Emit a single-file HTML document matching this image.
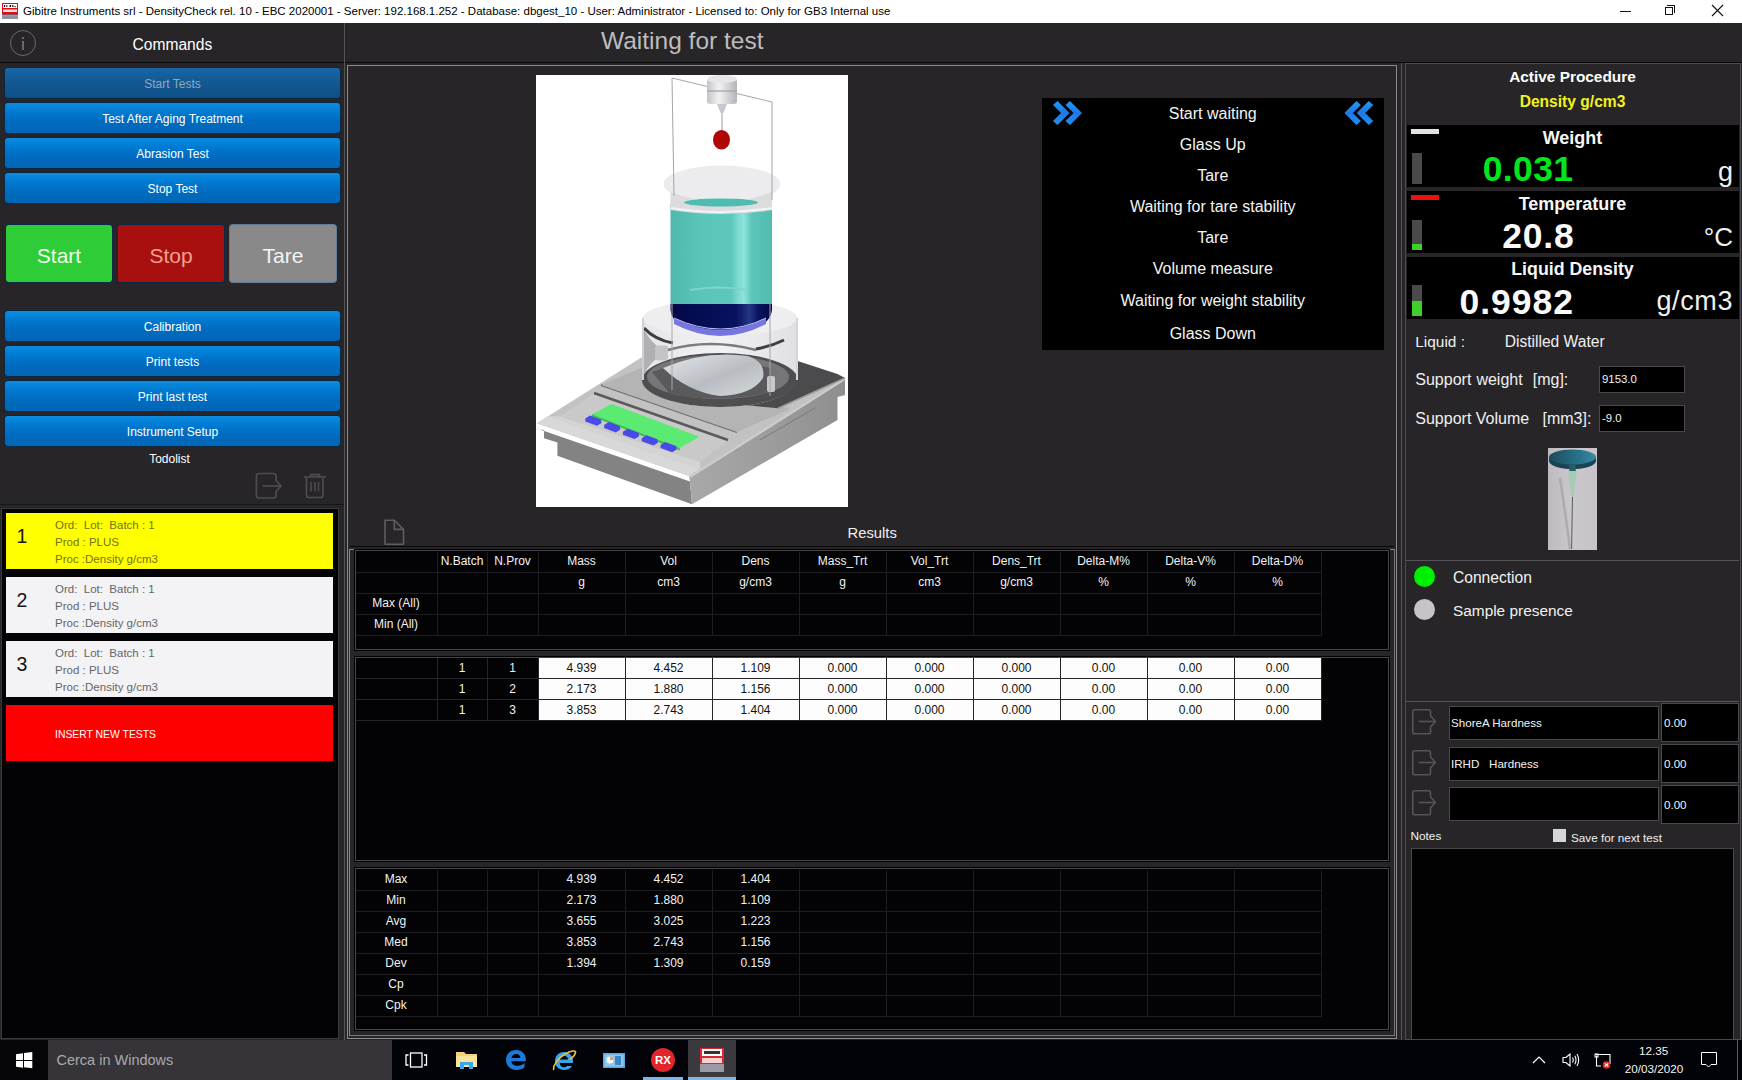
<!DOCTYPE html><html><head><meta charset="utf-8"><style>
*{margin:0;padding:0;box-sizing:border-box}
html,body{width:1742px;height:1080px;overflow:hidden;background:#272528;font-family:"Liberation Sans",sans-serif;color:#fff}
.a{position:absolute}
.t{white-space:pre}
.btn{position:absolute;left:5px;width:335px;height:30px;border-radius:3px;background:linear-gradient(#0c8ce2,#007ad2 30%,#006cc0 60%,#0066b6);box-shadow:0 0 0 1px #0b2740}
.big{position:absolute;top:225px;height:57px;border-radius:3px;box-shadow:0 0 0 1px #0a2a48}
</style></head><body>
<div class="a" style="left:0px;top:0px;width:1742px;height:23px;background:#fff;"></div>
<svg class="a" style="left:2px;top:3px" width="16" height="16"><rect width="16" height="11" fill="#e40c12"/><rect x="1" y="1" width="14" height="4" fill="#fff"/><g fill="#111"><rect x="2" y="2" width="1.2" height="2"/><rect x="4" y="2" width="1.5" height="2" fill="#666"/><rect x="7.5" y="2" width="1.5" height="2"/><rect x="10" y="2" width="1.5" height="2" fill="#333"/><rect x="12.5" y="3" width="1.2" height="1.2"/></g><rect x="1" y="6.5" width="14" height="2.5" fill="#f6dede"/><rect x="0" y="11" width="16" height="1.5" fill="#8a4a5a"/><rect x="0" y="12.5" width="16" height="3.5" fill="#8e92a4"/></svg>
<div class="a t " style="top:6.17px;font-size:11.5px;line-height:11.5px;color:#000;left:23px;">Gibitre Instruments srl - DensityCheck rel. 10 - EBC 2020001 - Server: 192.168.1.252 - Database: dbgest_10 - User: Administrator - Licensed to: Only for GB3 Internal use</div>
<div class="a" style="left:1620px;top:11px;width:11px;height:1px;background:#111;"></div>
<div class="a" style="left:1665px;top:7px;width:8px;height:8px;border:1px solid #111"></div>
<div class="a" style="left:1667px;top:5px;width:8px;height:8px;border-top:1px solid #111;border-right:1px solid #111"></div>
<svg class="a" style="left:1711px;top:4px" width="13" height="13"><path d="M1 1L12 12M12 1L1 12" stroke="#111" stroke-width="1.1"/></svg>
<div class="a" style="left:0px;top:62px;width:1742px;height:1px;background:#0a0a0a;"></div>
<div class="a" style="left:344px;top:23px;width:1px;height:1017px;background:#555;"></div>
<div class="a" style="left:10px;top:30px;width:26px;height:26px;border:1.6px solid #6a6a6a;border-radius:50%"></div>
<div class="a" style="left:22px;top:37px;width:1.6px;height:2px;background:#6a6a6a;"></div>
<div class="a" style="left:22px;top:40.5px;width:1.6px;height:9.5px;background:#6a6a6a;"></div>
<div class="a t " style="top:37.29px;font-size:15.6px;line-height:15.6px;color:#fff;left:132.5px;">Commands</div>
<div class="btn" style="top:67.5px;background:linear-gradient(#1b66a8,#135a96 40%,#0f4f86);"></div>
<div class="a t " style="top:77.84px;font-size:12px;line-height:12px;color:#8ea9c2;left:7.50px;width:330px;text-align:center;">Start Tests</div>
<div class="btn" style="top:103px;"></div>
<div class="a t " style="top:113.34px;font-size:12px;line-height:12px;color:#fff;left:7.50px;width:330px;text-align:center;">Test After Aging Treatment</div>
<div class="btn" style="top:138px;"></div>
<div class="a t " style="top:148.34px;font-size:12px;line-height:12px;color:#fff;left:7.50px;width:330px;text-align:center;">Abrasion Test</div>
<div class="btn" style="top:173px;"></div>
<div class="a t " style="top:183.34px;font-size:12px;line-height:12px;color:#fff;left:7.50px;width:330px;text-align:center;">Stop Test</div>
<div class="big" style="left:6px;width:106px;background:#2ecc37"></div>
<div class="big" style="left:118px;width:106px;background:#a81010"></div>
<div class="big" style="left:230px;width:106px;background:#898989;box-shadow:0 0 0 1px #607c98"></div>
<div class="a t " style="top:245.22px;font-size:21px;line-height:21px;color:#ecffec;left:6.00px;width:106px;text-align:center;">Start</div>
<div class="a t " style="top:245.22px;font-size:21px;line-height:21px;color:#f4a090;left:118.00px;width:106px;text-align:center;">Stop</div>
<div class="a t " style="top:245.22px;font-size:21px;line-height:21px;color:#f4f4f4;left:230.00px;width:106px;text-align:center;">Tare</div>
<div class="btn" style="top:310.5px;"></div>
<div class="a t " style="top:320.84px;font-size:12px;line-height:12px;color:#fff;left:7.50px;width:330px;text-align:center;">Calibration</div>
<div class="btn" style="top:345.5px;"></div>
<div class="a t " style="top:355.84px;font-size:12px;line-height:12px;color:#fff;left:7.50px;width:330px;text-align:center;">Print tests</div>
<div class="btn" style="top:380.5px;"></div>
<div class="a t " style="top:390.84px;font-size:12px;line-height:12px;color:#fff;left:7.50px;width:330px;text-align:center;">Print last test</div>
<div class="btn" style="top:415.5px;"></div>
<div class="a t " style="top:425.84px;font-size:12px;line-height:12px;color:#fff;left:7.50px;width:330px;text-align:center;">Instrument Setup</div>
<div class="a t " style="top:452.84px;font-size:12px;line-height:12px;color:#fff;left:119.50px;width:100px;text-align:center;">Todolist</div>
<svg class="a" style="left:254px;top:471px" width="30" height="30" fill="none" stroke="#4e4c50" stroke-width="1.7" stroke-linejoin="round">
<path d="M22 9.5V5Q22 2.5 19.5 2.5H5Q2.4 2.5 2.4 5V24.5Q2.4 27 5 27H19.5Q22 27 22 24.5V20.3L27.2 15L22 9.5"/><path d="M8.8 15H26.5"/></svg>
<svg class="a" style="left:302px;top:472px" width="26" height="28" fill="none" stroke="#4e4c50" stroke-width="1.7">
<path d="M2 4.9H23.8"/><path d="M8.6 4.5V2.6H17.4V4.5"/><path d="M4.5 6V23Q4.5 25.5 7 25.5H18.5Q21 25.5 21 23V6"/><path d="M9 10V19.5M12.9 10V19.5M16.5 10V19.5" stroke-width="1.5"/></svg>
<div class="a" style="left:1px;top:508px;width:338px;height:531px;background:#030205;border:1px solid #3a3a3a"></div>
<div class="a" style="left:0px;top:504px;width:344px;height:1px;background:#151515;"></div>
<div class="a" style="left:6px;top:513px;width:327px;height:56px;background:#ffff00;"></div>
<div class="a t " style="top:527.49px;font-size:19.5px;line-height:19.5px;color:#151515;left:7.00px;width:30px;text-align:center;">1</div>
<div class="a t " style="top:520.47px;font-size:11.5px;line-height:11.5px;color:#76721a;left:55px;">Ord:  Lot:  Batch : 1</div>
<div class="a t " style="top:537.47px;font-size:11.5px;line-height:11.5px;color:#76721a;left:55px;">Prod : PLUS</div>
<div class="a t " style="top:554.47px;font-size:11.5px;line-height:11.5px;color:#76721a;left:55px;">Proc :Density g/cm3</div>
<div class="a" style="left:6px;top:577px;width:327px;height:56px;background:#f3f2f5;"></div>
<div class="a t " style="top:591.49px;font-size:19.5px;line-height:19.5px;color:#151515;left:7.00px;width:30px;text-align:center;">2</div>
<div class="a t " style="top:584.47px;font-size:11.5px;line-height:11.5px;color:#666;left:55px;">Ord:  Lot:  Batch : 1</div>
<div class="a t " style="top:601.47px;font-size:11.5px;line-height:11.5px;color:#666;left:55px;">Prod : PLUS</div>
<div class="a t " style="top:618.47px;font-size:11.5px;line-height:11.5px;color:#666;left:55px;">Proc :Density g/cm3</div>
<div class="a" style="left:6px;top:641px;width:327px;height:56px;background:#f3f2f5;"></div>
<div class="a t " style="top:655.49px;font-size:19.5px;line-height:19.5px;color:#151515;left:7.00px;width:30px;text-align:center;">3</div>
<div class="a t " style="top:648.47px;font-size:11.5px;line-height:11.5px;color:#666;left:55px;">Ord:  Lot:  Batch : 1</div>
<div class="a t " style="top:665.47px;font-size:11.5px;line-height:11.5px;color:#666;left:55px;">Prod : PLUS</div>
<div class="a t " style="top:682.47px;font-size:11.5px;line-height:11.5px;color:#666;left:55px;">Proc :Density g/cm3</div>
<div class="a" style="left:6px;top:705px;width:327px;height:56px;background:#ff0000;"></div>
<div class="a t " style="top:729.70px;font-size:10.4px;line-height:10.4px;color:#fff;left:55px;">INSERT NEW TESTS</div>
<div class="a t " style="top:28.86px;font-size:24.5px;line-height:24.5px;color:#bdbdbd;left:601px;">Waiting for test</div>
<div class="a" style="left:347px;top:65px;width:1050px;height:974px;border:1px solid #8c8c8c"></div>
<div class="a" style="left:349px;top:549px;width:1046px;height:487px;border:1px solid #8a8a8a;border-right-color:#777;border-bottom-color:#777"></div>
<div class="a" style="left:350px;top:546px;width:1044px;height:1px;background:#0a0a0a;"></div>
<div class="a" style="left:536px;top:75px;width:312px;height:432px;background:#fff;overflow:hidden"><svg width="312" height="432" viewBox="536 75 312 432" style="position:absolute;left:0;top:0"><defs><linearGradient id="liq" x1="0" x2="1"><stop offset="0" stop-color="#4fb9ad"/><stop offset="0.3" stop-color="#5cc5ba"/><stop offset="0.6" stop-color="#5ec7bc"/><stop offset="0.66" stop-color="#7ad8cf"/><stop offset="0.72" stop-color="#8de4dc"/><stop offset="0.8" stop-color="#5dc5ba"/><stop offset="1" stop-color="#52bcb1"/></linearGradient><linearGradient id="navy" x1="0" x2="1"><stop offset="0" stop-color="#030848"/><stop offset="0.65" stop-color="#081260"/><stop offset="0.78" stop-color="#253585"/><stop offset="0.86" stop-color="#0a1560"/><stop offset="1" stop-color="#040848"/></linearGradient><linearGradient id="sens" x1="0" x2="1"><stop offset="0" stop-color="#c4c4c8"/><stop offset="0.4" stop-color="#f2f2f4"/><stop offset="1" stop-color="#b4b4b8"/></linearGradient><linearGradient id="rface" x1="0" x2="1"><stop offset="0" stop-color="#a8a8a8"/><stop offset="0.6" stop-color="#9a9a9a"/><stop offset="1" stop-color="#8e8e8e"/></linearGradient><linearGradient id="plate" x1="0" x2="1" y1="0" y2="1"><stop offset="0" stop-color="#e4e6ea"/><stop offset="0.55" stop-color="#b9bdc1"/><stop offset="1" stop-color="#d6d8db"/></linearGradient><linearGradient id="glass" x1="0" x2="1"><stop offset="0" stop-color="#e6e6e8"/><stop offset="0.5" stop-color="#f2f2f4"/><stop offset="1" stop-color="#e0e0e2"/></linearGradient></defs><!-- front face --><polygon points="537,428.4 690,481.5 692,504.3 557.4,455.8 557.4,442.4 544,438.2 544,430 537,429" fill="#838383"/><!-- right face --><polygon points="689,476 845,378 845,395 837.5,397 837.5,420 692,504.3 690,481.5" fill="url(#rface)"/><line x1="690" y1="477" x2="845" y2="379" stroke="#cfcfcf" stroke-width="2"/><line x1="760" y1="440" x2="815" y2="408" stroke="#7a7a7a" stroke-width="1"/><!-- top plate --><polygon points="537,423.2 689,476 845,378 692,325.5" fill="#c2c2c2"/><!-- front bevel strip --><polygon points="537,423.2 689,476 700,469 548,416" fill="#d8d8d8"/><!-- display recess --><polygon points="560,416.5 594,393 728,440 700,462" fill="#c9c9c9"/><polygon points="548,416 560,416.5 700,462 700,469" fill="#d4d4d4"/><line x1="594" y1="393" x2="728" y2="440" stroke="#5a5a5a" stroke-width="2.6"/><line x1="601" y1="385" x2="737" y2="432" stroke="#6e6e6e" stroke-width="2"/><polygon points="601,385 737,432 790,409 660,360" fill="#b4b4b4"/><!-- dark back right area --><polygon points="773,353 837.5,374 845,378 778,408.3 745,405 760,360" fill="#4b4a4d"/><line x1="845" y1="378" x2="778" y2="408.3" stroke="#9a9a9a" stroke-width="1.5"/><!-- green display --><polygon points="592,414.2 611.6,404.1 699.4,436.7 679.8,448" fill="#5ceb72"/><polygon points="592,414.2 679.8,448 679.8,450.5 592,416.5" fill="#38c24e"/><!-- blue keys --><g fill="#4a4ae6"><polygon points="585.3,418.5 590,415.5 601,419.5 601.5,423 597,425.8 585.3,421.5"/><polygon points="604.1,425.1 608.8,422.1 619.8,426.1 620.3,429.6 615.8,432.4 604.1,428.1"/><polygon points="622.9,431.7 627.6,428.7 638.6,432.7 639.1,436.2 634.6,439 622.9,434.7"/><polygon points="641.7,438.3 646.4,435.3 657.4,439.3 657.9,442.8 653.4,445.6 641.7,441.3"/><polygon points="660.5,444.9 665.2,441.9 676.2,445.9 676.7,449.4 672.2,452.2 660.5,447.9"/></g><!-- glass enclosure --><path d="M643,318 L643,380 A77,27 0 0 0 797,380 L797,318Z" fill="url(#glass)"/><ellipse cx="720" cy="380" rx="78" ry="27" fill="#4e4e50"/><ellipse cx="718" cy="377" rx="71" ry="22" fill="#767678"/><path d="M652,372 Q700,352 770,368 L772,392 Q720,404 670,394Z" fill="#5a5a5c"/><path d="M663,368 Q705,350 748,356 Q766,362 763,378 Q752,395 720,396 Q688,392 663,368Z" fill="url(#plate)"/><path d="M643,326 L643,376 Q650,360 668,352 Q650,345 643,326Z" fill="#b0b0b2"/><ellipse cx="720" cy="318" rx="77" ry="18" fill="#eeeef0"/><path d="M644,328 Q655,340 673,343 M756,349 Q772,346 784,340" stroke="#3e3e40" stroke-width="3" fill="none"/><path d="M668,350 Q710,338 756,350" stroke="#7a7a7c" stroke-width="2.5" fill="none"/><rect x="655" y="345.6" width="13" height="15" rx="3" fill="#c4c4c6"/><rect x="767" y="376" width="8" height="16" rx="2" fill="#c8c8ca"/><rect x="642" y="318" width="2" height="62" fill="#d0d0d2"/><rect x="796" y="318" width="2" height="62" fill="#d6d6d8"/><!-- beaker --><ellipse cx="722" cy="184" rx="58.5" ry="18.5" fill="#ececef"/><path d="M670.5,204 L670.5,304 L772,304 L772,204Z" fill="url(#liq)"/><path d="M670.5,304 L772,304 L772,310 Q770,332 721,334 Q672,332 670.5,310Z" fill="url(#navy)"/><path d="M674,318 Q721,342 766,318 L766,324 Q721,348 674,324Z" fill="#7676e0"/><path d="M674,318 Q721,340 766,318" stroke="#c0c0f6" stroke-width="1" fill="none"/><path d="M670.5,192 Q721,212 772,192 L772,210 Q721,218 670.5,210Z" fill="#dcdcdf"/><ellipse cx="721" cy="202.5" rx="37" ry="4" fill="#4dbdb1"/><path d="M671,208 Q721,216 772,208" stroke="#f0f4f4" stroke-width="2.2" fill="none"/><path d="M690,290 Q720,285 745,290" stroke="#7ed6cc" stroke-width="2" fill="none"/><!-- wire frame --><path d="M674,196 L672,78 L772,102 L772,200" stroke="#a4a4a8" stroke-width="1" fill="none"/><path d="M672,304 L672,390 M770,304 L770,396" stroke="#a8a8ac" stroke-width="1" fill="none"/><!-- sensor --><rect x="707" y="79" width="30" height="25" rx="3" fill="url(#sens)"/><ellipse cx="722" cy="79" rx="15" ry="4" fill="#e6e6e8"/><line x1="707" y1="91" x2="737" y2="91" stroke="#a0a0a4" stroke-width="1.2"/><path d="M717,104 L727,104 L723.5,113 L720.5,113Z" fill="#c8c8d0"/><line x1="722" y1="113" x2="722" y2="131" stroke="#9a9aa0" stroke-width="1"/><ellipse cx="721.5" cy="139.7" rx="8.5" ry="9.8" fill="#b00606"/></svg></div>
<div class="a" style="left:1042px;top:98px;width:342px;height:252px;background:#000"></div>
<div class="a t " style="top:106.26px;font-size:16px;line-height:16px;color:#f4f4f4;left:1042.75px;width:340px;text-align:center;">Start waiting</div>
<div class="a t " style="top:137.46px;font-size:16px;line-height:16px;color:#f4f4f4;left:1042.75px;width:340px;text-align:center;">Glass Up</div>
<div class="a t " style="top:168.16px;font-size:16px;line-height:16px;color:#f4f4f4;left:1042.75px;width:340px;text-align:center;">Tare</div>
<div class="a t " style="top:199.06px;font-size:16px;line-height:16px;color:#f4f4f4;left:1042.75px;width:340px;text-align:center;">Waiting for tare stability</div>
<div class="a t " style="top:229.76px;font-size:16px;line-height:16px;color:#f4f4f4;left:1042.75px;width:340px;text-align:center;">Tare</div>
<div class="a t " style="top:260.96px;font-size:16px;line-height:16px;color:#f4f4f4;left:1042.75px;width:340px;text-align:center;">Volume measure</div>
<div class="a t " style="top:292.76px;font-size:16px;line-height:16px;color:#f4f4f4;left:1042.75px;width:340px;text-align:center;">Waiting for weight stability</div>
<div class="a t " style="top:326.36px;font-size:16px;line-height:16px;color:#f4f4f4;left:1042.75px;width:340px;text-align:center;">Glass Down</div>
<svg class="a" style="left:1050px;top:99px" width="36" height="30"><defs><linearGradient id="cg" x1="0" y1="0" x2="0" y2="1"><stop offset="0" stop-color="#1a9cfa"/><stop offset="0.5" stop-color="#1f78e6"/><stop offset="1" stop-color="#2290f0"/></linearGradient></defs>
<path d="M3,6 L7.5,2 L19.5,14 L7.5,26 L3,22 L11,14Z" fill="url(#cg)"/><path d="M15.5,6 L20.0,2 L32.0,14 L20.0,26 L15.5,22 L23.5,14Z" fill="url(#cg)"/></svg>
<svg class="a" style="left:1342px;top:99px" width="36" height="30">
<path d="M18.9,6 L14.4,2 L2.4,14 L14.4,26 L18.9,22 L10.9,14Z" fill="url(#cg)"/><path d="M31.2,6 L26.7,2 L14.7,14 L26.7,26 L31.2,22 L23.2,14Z" fill="url(#cg)"/></svg>
<svg class="a" style="left:383px;top:518px" width="23" height="29" fill="none" stroke="#5e5c60" stroke-width="1.6" stroke-linejoin="round"><path d="M2 2.3H11.3L20.5 11.4V26.2H2Z M11.3 2.3V11.4H20.5"/></svg>
<div class="a t " style="top:526.37px;font-size:14.8px;line-height:14.8px;color:#f0f0f0;left:847.5px;">Results</div>
<div class="a" style="left:354px;top:549px;width:1036px;height:102px;border:1px solid #000"></div>
<div class="a" style="left:355px;top:550px;width:1034px;height:100px;background:#030204;border:1px solid #474549"></div>
<div class="a" style="left:356px;top:571.5px;width:965px;height:1px;background:#1e1d20;"></div>
<div class="a" style="left:356px;top:592.5px;width:965px;height:1px;background:#1e1d20;"></div>
<div class="a" style="left:356px;top:613.5px;width:965px;height:1px;background:#1e1d20;"></div>
<div class="a" style="left:356px;top:634.5px;width:965px;height:1px;background:#1e1d20;"></div>
<div class="a" style="left:437px;top:551.5px;width:1px;height:84.0px;background:#1e1d20;"></div>
<div class="a" style="left:487px;top:551.5px;width:1px;height:84.0px;background:#1e1d20;"></div>
<div class="a" style="left:538px;top:551.5px;width:1px;height:84.0px;background:#1e1d20;"></div>
<div class="a" style="left:625px;top:551.5px;width:1px;height:84.0px;background:#1e1d20;"></div>
<div class="a" style="left:712px;top:551.5px;width:1px;height:84.0px;background:#1e1d20;"></div>
<div class="a" style="left:799px;top:551.5px;width:1px;height:84.0px;background:#1e1d20;"></div>
<div class="a" style="left:886px;top:551.5px;width:1px;height:84.0px;background:#1e1d20;"></div>
<div class="a" style="left:973px;top:551.5px;width:1px;height:84.0px;background:#1e1d20;"></div>
<div class="a" style="left:1060px;top:551.5px;width:1px;height:84.0px;background:#1e1d20;"></div>
<div class="a" style="left:1147px;top:551.5px;width:1px;height:84.0px;background:#1e1d20;"></div>
<div class="a" style="left:1234px;top:551.5px;width:1px;height:84.0px;background:#1e1d20;"></div>
<div class="a" style="left:1321px;top:551.5px;width:1px;height:84.0px;background:#1e1d20;"></div>
<div class="a t " style="top:554.84px;font-size:12px;line-height:12px;color:#f2f2f2;left:417.00px;width:90px;text-align:center;">N.Batch</div>
<div class="a t " style="top:554.84px;font-size:12px;line-height:12px;color:#f2f2f2;left:467.50px;width:90px;text-align:center;">N.Prov</div>
<div class="a t " style="top:554.84px;font-size:12px;line-height:12px;color:#f2f2f2;left:536.50px;width:90px;text-align:center;">Mass</div>
<div class="a t " style="top:554.84px;font-size:12px;line-height:12px;color:#f2f2f2;left:623.50px;width:90px;text-align:center;">Vol</div>
<div class="a t " style="top:554.84px;font-size:12px;line-height:12px;color:#f2f2f2;left:710.50px;width:90px;text-align:center;">Dens</div>
<div class="a t " style="top:554.84px;font-size:12px;line-height:12px;color:#f2f2f2;left:797.50px;width:90px;text-align:center;">Mass_Trt</div>
<div class="a t " style="top:554.84px;font-size:12px;line-height:12px;color:#f2f2f2;left:884.50px;width:90px;text-align:center;">Vol_Trt</div>
<div class="a t " style="top:554.84px;font-size:12px;line-height:12px;color:#f2f2f2;left:971.50px;width:90px;text-align:center;">Dens_Trt</div>
<div class="a t " style="top:554.84px;font-size:12px;line-height:12px;color:#f2f2f2;left:1058.50px;width:90px;text-align:center;">Delta-M%</div>
<div class="a t " style="top:554.84px;font-size:12px;line-height:12px;color:#f2f2f2;left:1145.50px;width:90px;text-align:center;">Delta-V%</div>
<div class="a t " style="top:554.84px;font-size:12px;line-height:12px;color:#f2f2f2;left:1232.50px;width:90px;text-align:center;">Delta-D%</div>
<div class="a t " style="top:576.04px;font-size:12px;line-height:12px;color:#f2f2f2;left:536.50px;width:90px;text-align:center;">g</div>
<div class="a t " style="top:576.04px;font-size:12px;line-height:12px;color:#f2f2f2;left:623.50px;width:90px;text-align:center;">cm3</div>
<div class="a t " style="top:576.04px;font-size:12px;line-height:12px;color:#f2f2f2;left:710.50px;width:90px;text-align:center;">g/cm3</div>
<div class="a t " style="top:576.04px;font-size:12px;line-height:12px;color:#f2f2f2;left:797.50px;width:90px;text-align:center;">g</div>
<div class="a t " style="top:576.04px;font-size:12px;line-height:12px;color:#f2f2f2;left:884.50px;width:90px;text-align:center;">cm3</div>
<div class="a t " style="top:576.04px;font-size:12px;line-height:12px;color:#f2f2f2;left:971.50px;width:90px;text-align:center;">g/cm3</div>
<div class="a t " style="top:576.04px;font-size:12px;line-height:12px;color:#f2f2f2;left:1058.50px;width:90px;text-align:center;">%</div>
<div class="a t " style="top:576.04px;font-size:12px;line-height:12px;color:#f2f2f2;left:1145.50px;width:90px;text-align:center;">%</div>
<div class="a t " style="top:576.04px;font-size:12px;line-height:12px;color:#f2f2f2;left:1232.50px;width:90px;text-align:center;">%</div>
<div class="a t " style="top:597.44px;font-size:12px;line-height:12px;color:#f2f2f2;left:351.00px;width:90px;text-align:center;">Max (All)</div>
<div class="a t " style="top:618.24px;font-size:12px;line-height:12px;color:#f2f2f2;left:351.00px;width:90px;text-align:center;">Min (All)</div>
<div class="a" style="left:354px;top:656px;width:1036px;height:206px;border:1px solid #000"></div>
<div class="a" style="left:355px;top:657px;width:1034px;height:204px;background:#030204;border:1px solid #474549"></div>
<div class="a" style="left:538px;top:658px;width:783px;height:63px;background:#fdfdfd;"></div>
<div class="a" style="left:356px;top:678px;width:965px;height:1px;background:#262428;"></div>
<div class="a" style="left:356px;top:699px;width:965px;height:1px;background:#262428;"></div>
<div class="a" style="left:356px;top:720px;width:965px;height:1px;background:#262428;"></div>
<div class="a" style="left:437px;top:658px;width:1px;height:63px;background:#262428;"></div>
<div class="a" style="left:487px;top:658px;width:1px;height:63px;background:#262428;"></div>
<div class="a" style="left:538px;top:658px;width:1px;height:63px;background:#262428;"></div>
<div class="a" style="left:625px;top:658px;width:1px;height:63px;background:#262428;"></div>
<div class="a" style="left:712px;top:658px;width:1px;height:63px;background:#262428;"></div>
<div class="a" style="left:799px;top:658px;width:1px;height:63px;background:#262428;"></div>
<div class="a" style="left:886px;top:658px;width:1px;height:63px;background:#262428;"></div>
<div class="a" style="left:973px;top:658px;width:1px;height:63px;background:#262428;"></div>
<div class="a" style="left:1060px;top:658px;width:1px;height:63px;background:#262428;"></div>
<div class="a" style="left:1147px;top:658px;width:1px;height:63px;background:#262428;"></div>
<div class="a" style="left:1234px;top:658px;width:1px;height:63px;background:#262428;"></div>
<div class="a" style="left:1321px;top:658px;width:1px;height:63px;background:#262428;"></div>
<div class="a t " style="top:662.04px;font-size:12px;line-height:12px;color:#f2f2f2;left:419.00px;width:86px;text-align:center;">1</div>
<div class="a t " style="top:662.04px;font-size:12px;line-height:12px;color:#f2f2f2;left:469.50px;width:86px;text-align:center;">1</div>
<div class="a t " style="top:662.04px;font-size:12px;line-height:12px;color:#111;left:538.50px;width:86px;text-align:center;">4.939</div>
<div class="a t " style="top:662.04px;font-size:12px;line-height:12px;color:#111;left:625.50px;width:86px;text-align:center;">4.452</div>
<div class="a t " style="top:662.04px;font-size:12px;line-height:12px;color:#111;left:712.50px;width:86px;text-align:center;">1.109</div>
<div class="a t " style="top:662.04px;font-size:12px;line-height:12px;color:#111;left:799.50px;width:86px;text-align:center;">0.000</div>
<div class="a t " style="top:662.04px;font-size:12px;line-height:12px;color:#111;left:886.50px;width:86px;text-align:center;">0.000</div>
<div class="a t " style="top:662.04px;font-size:12px;line-height:12px;color:#111;left:973.50px;width:86px;text-align:center;">0.000</div>
<div class="a t " style="top:662.04px;font-size:12px;line-height:12px;color:#111;left:1060.50px;width:86px;text-align:center;">0.00</div>
<div class="a t " style="top:662.04px;font-size:12px;line-height:12px;color:#111;left:1147.50px;width:86px;text-align:center;">0.00</div>
<div class="a t " style="top:662.04px;font-size:12px;line-height:12px;color:#111;left:1234.50px;width:86px;text-align:center;">0.00</div>
<div class="a t " style="top:683.04px;font-size:12px;line-height:12px;color:#f2f2f2;left:419.00px;width:86px;text-align:center;">1</div>
<div class="a t " style="top:683.04px;font-size:12px;line-height:12px;color:#f2f2f2;left:469.50px;width:86px;text-align:center;">2</div>
<div class="a t " style="top:683.04px;font-size:12px;line-height:12px;color:#111;left:538.50px;width:86px;text-align:center;">2.173</div>
<div class="a t " style="top:683.04px;font-size:12px;line-height:12px;color:#111;left:625.50px;width:86px;text-align:center;">1.880</div>
<div class="a t " style="top:683.04px;font-size:12px;line-height:12px;color:#111;left:712.50px;width:86px;text-align:center;">1.156</div>
<div class="a t " style="top:683.04px;font-size:12px;line-height:12px;color:#111;left:799.50px;width:86px;text-align:center;">0.000</div>
<div class="a t " style="top:683.04px;font-size:12px;line-height:12px;color:#111;left:886.50px;width:86px;text-align:center;">0.000</div>
<div class="a t " style="top:683.04px;font-size:12px;line-height:12px;color:#111;left:973.50px;width:86px;text-align:center;">0.000</div>
<div class="a t " style="top:683.04px;font-size:12px;line-height:12px;color:#111;left:1060.50px;width:86px;text-align:center;">0.00</div>
<div class="a t " style="top:683.04px;font-size:12px;line-height:12px;color:#111;left:1147.50px;width:86px;text-align:center;">0.00</div>
<div class="a t " style="top:683.04px;font-size:12px;line-height:12px;color:#111;left:1234.50px;width:86px;text-align:center;">0.00</div>
<div class="a t " style="top:704.04px;font-size:12px;line-height:12px;color:#f2f2f2;left:419.00px;width:86px;text-align:center;">1</div>
<div class="a t " style="top:704.04px;font-size:12px;line-height:12px;color:#f2f2f2;left:469.50px;width:86px;text-align:center;">3</div>
<div class="a t " style="top:704.04px;font-size:12px;line-height:12px;color:#111;left:538.50px;width:86px;text-align:center;">3.853</div>
<div class="a t " style="top:704.04px;font-size:12px;line-height:12px;color:#111;left:625.50px;width:86px;text-align:center;">2.743</div>
<div class="a t " style="top:704.04px;font-size:12px;line-height:12px;color:#111;left:712.50px;width:86px;text-align:center;">1.404</div>
<div class="a t " style="top:704.04px;font-size:12px;line-height:12px;color:#111;left:799.50px;width:86px;text-align:center;">0.000</div>
<div class="a t " style="top:704.04px;font-size:12px;line-height:12px;color:#111;left:886.50px;width:86px;text-align:center;">0.000</div>
<div class="a t " style="top:704.04px;font-size:12px;line-height:12px;color:#111;left:973.50px;width:86px;text-align:center;">0.000</div>
<div class="a t " style="top:704.04px;font-size:12px;line-height:12px;color:#111;left:1060.50px;width:86px;text-align:center;">0.00</div>
<div class="a t " style="top:704.04px;font-size:12px;line-height:12px;color:#111;left:1147.50px;width:86px;text-align:center;">0.00</div>
<div class="a t " style="top:704.04px;font-size:12px;line-height:12px;color:#111;left:1234.50px;width:86px;text-align:center;">0.00</div>
<div class="a" style="left:354px;top:867px;width:1036px;height:164px;border:1px solid #000"></div>
<div class="a" style="left:355px;top:868px;width:1034px;height:162px;background:#030204;border:1px solid #474549"></div>
<div class="a" style="left:356px;top:889.5px;width:965px;height:1px;background:#1e1d20;"></div>
<div class="a" style="left:356px;top:910.5px;width:965px;height:1px;background:#1e1d20;"></div>
<div class="a" style="left:356px;top:931.5px;width:965px;height:1px;background:#1e1d20;"></div>
<div class="a" style="left:356px;top:952.5px;width:965px;height:1px;background:#1e1d20;"></div>
<div class="a" style="left:356px;top:973.5px;width:965px;height:1px;background:#1e1d20;"></div>
<div class="a" style="left:356px;top:994.5px;width:965px;height:1px;background:#1e1d20;"></div>
<div class="a" style="left:356px;top:1015.5px;width:965px;height:1px;background:#1e1d20;"></div>
<div class="a" style="left:437px;top:869.5px;width:1px;height:147.0px;background:#1e1d20;"></div>
<div class="a" style="left:487px;top:869.5px;width:1px;height:147.0px;background:#1e1d20;"></div>
<div class="a" style="left:538px;top:869.5px;width:1px;height:147.0px;background:#1e1d20;"></div>
<div class="a" style="left:625px;top:869.5px;width:1px;height:147.0px;background:#1e1d20;"></div>
<div class="a" style="left:712px;top:869.5px;width:1px;height:147.0px;background:#1e1d20;"></div>
<div class="a" style="left:799px;top:869.5px;width:1px;height:147.0px;background:#1e1d20;"></div>
<div class="a" style="left:886px;top:869.5px;width:1px;height:147.0px;background:#1e1d20;"></div>
<div class="a" style="left:973px;top:869.5px;width:1px;height:147.0px;background:#1e1d20;"></div>
<div class="a" style="left:1060px;top:869.5px;width:1px;height:147.0px;background:#1e1d20;"></div>
<div class="a" style="left:1147px;top:869.5px;width:1px;height:147.0px;background:#1e1d20;"></div>
<div class="a" style="left:1234px;top:869.5px;width:1px;height:147.0px;background:#1e1d20;"></div>
<div class="a" style="left:1321px;top:869.5px;width:1px;height:147.0px;background:#1e1d20;"></div>
<div class="a t " style="top:873.04px;font-size:12px;line-height:12px;color:#f2f2f2;left:356.00px;width:80px;text-align:center;">Max</div>
<div class="a t " style="top:873.04px;font-size:12px;line-height:12px;color:#f2f2f2;left:538.50px;width:86px;text-align:center;">4.939</div>
<div class="a t " style="top:873.04px;font-size:12px;line-height:12px;color:#f2f2f2;left:625.50px;width:86px;text-align:center;">4.452</div>
<div class="a t " style="top:873.04px;font-size:12px;line-height:12px;color:#f2f2f2;left:712.50px;width:86px;text-align:center;">1.404</div>
<div class="a t " style="top:893.99px;font-size:12px;line-height:12px;color:#f2f2f2;left:356.00px;width:80px;text-align:center;">Min</div>
<div class="a t " style="top:893.99px;font-size:12px;line-height:12px;color:#f2f2f2;left:538.50px;width:86px;text-align:center;">2.173</div>
<div class="a t " style="top:893.99px;font-size:12px;line-height:12px;color:#f2f2f2;left:625.50px;width:86px;text-align:center;">1.880</div>
<div class="a t " style="top:893.99px;font-size:12px;line-height:12px;color:#f2f2f2;left:712.50px;width:86px;text-align:center;">1.109</div>
<div class="a t " style="top:914.94px;font-size:12px;line-height:12px;color:#f2f2f2;left:356.00px;width:80px;text-align:center;">Avg</div>
<div class="a t " style="top:914.94px;font-size:12px;line-height:12px;color:#f2f2f2;left:538.50px;width:86px;text-align:center;">3.655</div>
<div class="a t " style="top:914.94px;font-size:12px;line-height:12px;color:#f2f2f2;left:625.50px;width:86px;text-align:center;">3.025</div>
<div class="a t " style="top:914.94px;font-size:12px;line-height:12px;color:#f2f2f2;left:712.50px;width:86px;text-align:center;">1.223</div>
<div class="a t " style="top:935.89px;font-size:12px;line-height:12px;color:#f2f2f2;left:356.00px;width:80px;text-align:center;">Med</div>
<div class="a t " style="top:935.89px;font-size:12px;line-height:12px;color:#f2f2f2;left:538.50px;width:86px;text-align:center;">3.853</div>
<div class="a t " style="top:935.89px;font-size:12px;line-height:12px;color:#f2f2f2;left:625.50px;width:86px;text-align:center;">2.743</div>
<div class="a t " style="top:935.89px;font-size:12px;line-height:12px;color:#f2f2f2;left:712.50px;width:86px;text-align:center;">1.156</div>
<div class="a t " style="top:956.84px;font-size:12px;line-height:12px;color:#f2f2f2;left:356.00px;width:80px;text-align:center;">Dev</div>
<div class="a t " style="top:956.84px;font-size:12px;line-height:12px;color:#f2f2f2;left:538.50px;width:86px;text-align:center;">1.394</div>
<div class="a t " style="top:956.84px;font-size:12px;line-height:12px;color:#f2f2f2;left:625.50px;width:86px;text-align:center;">1.309</div>
<div class="a t " style="top:956.84px;font-size:12px;line-height:12px;color:#f2f2f2;left:712.50px;width:86px;text-align:center;">0.159</div>
<div class="a t " style="top:977.79px;font-size:12px;line-height:12px;color:#f2f2f2;left:356.00px;width:80px;text-align:center;">Cp</div>
<div class="a t " style="top:998.74px;font-size:12px;line-height:12px;color:#f2f2f2;left:356.00px;width:80px;text-align:center;">Cpk</div>
<div class="a" style="left:1401px;top:63px;width:1px;height:977px;background:#58565a;"></div>
<div class="a" style="left:1405px;top:63px;width:336px;height:977px;border:1px solid #4e4c50"></div>
<div class="a t " style="top:68.86px;font-size:15.4px;line-height:15.4px;color:#fff;font-weight:700;left:1412.50px;width:320px;text-align:center;">Active Procedure</div>
<div class="a t " style="top:93.59px;font-size:15.6px;line-height:15.6px;color:#f2f21e;font-weight:700;left:1412.50px;width:320px;text-align:center;">Density g/cm3</div>
<div class="a" style="left:1407px;top:125px;width:331.5px;height:61.5px;background:#000;"></div>
<div class="a" style="left:1407px;top:191px;width:331.5px;height:62px;background:#000;"></div>
<div class="a" style="left:1407px;top:257px;width:331.5px;height:61.5px;background:#000;"></div>
<div class="a" style="left:1411px;top:129px;width:28px;height:5px;background:#e2e2e2;"></div>
<div class="a" style="left:1411px;top:195px;width:28px;height:5px;background:#ee1010;"></div>
<div class="a" style="left:1412px;top:153px;width:10px;height:31px;background:#4a4a4a;"></div>
<div class="a" style="left:1412px;top:219.5px;width:10px;height:30.5px;background:#4a4a4a;"></div>
<div class="a" style="left:1412px;top:244px;width:10px;height:6px;background:#3fcf2a;"></div>
<div class="a" style="left:1412px;top:285px;width:10px;height:31px;background:#4a4a4a;"></div>
<div class="a" style="left:1412px;top:300.5px;width:10px;height:15.5px;background:#3fcf2a;"></div>
<div class="a t " style="top:129.26px;font-size:18px;line-height:18px;color:#f6f6f6;font-weight:700;left:1412.50px;width:320px;text-align:center;">Weight</div>
<div class="a t " style="top:195.26px;font-size:18px;line-height:18px;color:#f6f6f6;font-weight:700;left:1412.50px;width:320px;text-align:center;">Temperature</div>
<div class="a t " style="top:261.43px;font-size:17.8px;line-height:17.8px;color:#f6f6f6;font-weight:700;left:1412.50px;width:320px;text-align:center;">Liquid Density</div>
<div class="a t " style="top:152.45px;font-size:35.5px;line-height:35.5px;color:#00e61e;font-weight:700;right:168.5px;text-align:right;letter-spacing:0.4px;">0.031</div>
<div class="a t " style="top:218.75px;font-size:35.5px;line-height:35.5px;color:#fafafa;font-weight:700;right:167.5px;text-align:right;letter-spacing:0.8px;">20.8</div>
<div class="a t " style="top:284.55px;font-size:35.5px;line-height:35.5px;color:#fafafa;font-weight:700;right:168px;text-align:right;letter-spacing:1px;">0.9982</div>
<div class="a t " style="top:158.64px;font-size:27px;line-height:27px;color:#f0f0f0;right:9px;text-align:right;">g</div>
<div class="a t " style="top:223.79px;font-size:26px;line-height:26px;color:#f0f0f0;right:9px;text-align:right;">°C</div>
<div class="a t " style="top:288.14px;font-size:27px;line-height:27px;color:#f0f0f0;right:9px;text-align:right;letter-spacing:0.6px;">g/cm3</div>
<div class="a t " style="top:333.96px;font-size:15.4px;line-height:15.4px;color:#f0f0f0;left:1415.3px;">Liquid :</div>
<div class="a t " style="top:333.79px;font-size:15.6px;line-height:15.6px;color:#f0f0f0;left:1504.7px;">Distilled Water</div>
<div class="a t " style="top:372.46px;font-size:16px;line-height:16px;color:#f0f0f0;left:1415.3px;word-spacing:0.6px;">Support weight  [mg]:</div>
<div class="a t " style="top:411.16px;font-size:16px;line-height:16px;color:#f0f0f0;left:1415.3px;">Support Volume   [mm3]:</div>
<div class="a" style="left:1599px;top:366px;width:86px;height:27px;background:#000;border:1px solid #4a484c"></div>
<div class="a" style="left:1599px;top:405px;width:86px;height:27px;background:#000;border:1px solid #4a484c"></div>
<div class="a t " style="top:374.15px;font-size:11.4px;line-height:11.4px;color:#f4f4f4;left:1602px;">9153.0</div>
<div class="a t " style="top:413.25px;font-size:11.4px;line-height:11.4px;color:#f4f4f4;left:1602px;">-9.0</div>
<svg class="a" style="left:1548px;top:448px" width="49" height="102">
<defs><linearGradient id="nb" x1="0" x2="1"><stop offset="0" stop-color="#bdbbbf"/><stop offset="0.5" stop-color="#cac8cc"/><stop offset="1" stop-color="#c6c4c8"/></linearGradient>
<linearGradient id="disk" x1="0" x2="1"><stop offset="0" stop-color="#1d4c5c"/><stop offset="0.7" stop-color="#2a7690"/><stop offset="1" stop-color="#3a8aa6"/></linearGradient></defs>
<rect width="49" height="102" fill="url(#nb)"/>
<path d="M12 30 Q18 70 22 101" stroke="#9c9aa0" stroke-width="2.5" fill="none" opacity="0.6"/>
<path d="M1 9 L1 13 A23.5 8 0 0 0 48 13 L48 9Z" fill="#1a4453"/>
<ellipse cx="24.5" cy="9" rx="23.5" ry="7.5" fill="url(#disk)"/>
<rect x="21.3" y="17" width="6.4" height="7" fill="#2a5c64"/>
<path d="M20 23 L29 23 L25.5 49.5 L23.5 49.5Z" fill="#a6ccb6"/>
<path d="M24.5 49 L23.6 101" stroke="#5a5a60" stroke-width="1" fill="none"/>
</svg>
<div class="a" style="left:1406px;top:560px;width:333px;height:1px;background:#555358;"></div>
<div class="a" style="left:1413.5px;top:566px;width:21px;height:21px;border-radius:50%;background:#00ee00"></div>
<div class="a" style="left:1413.5px;top:599px;width:21px;height:21px;border-radius:50%;background:#c6c4c8"></div>
<div class="a t " style="top:569.89px;font-size:15.6px;line-height:15.6px;color:#f2f2f2;left:1453px;">Connection</div>
<div class="a t " style="top:603.26px;font-size:15.4px;line-height:15.4px;color:#f2f2f2;left:1453px;">Sample presence</div>
<div class="a" style="left:1406px;top:701px;width:333px;height:1px;background:#555358;"></div>
<svg class="a" style="left:1411px;top:708px" width="28" height="28" fill="none" stroke="#56545a" stroke-width="1.6" stroke-linejoin="round"><path d="M19.5 8V3.5Q19.5 1.8 17.8 1.8H3.5Q1.8 1.8 1.8 3.5V24Q1.8 25.8 3.5 25.8H17.8Q19.5 25.8 19.5 24V19L24.5 13.5L19.5 8"/><path d="M7.5 13.5H24"/></svg>
<div class="a" style="left:1449px;top:706px;width:210px;height:34px;background:#000;border:1px solid #4a484c"></div>
<div class="a" style="left:1661px;top:703px;width:78px;height:39px;background:#000;border:1px solid #4a484c"></div>
<div class="a t " style="top:717.18px;font-size:11.6px;line-height:11.6px;color:#f2f2f2;left:1451px;">ShoreA Hardness</div>
<div class="a t " style="top:717.18px;font-size:11.6px;line-height:11.6px;color:#f2f2f2;left:1664px;">0.00</div>
<svg class="a" style="left:1411px;top:749px" width="28" height="28" fill="none" stroke="#56545a" stroke-width="1.6" stroke-linejoin="round"><path d="M19.5 8V3.5Q19.5 1.8 17.8 1.8H3.5Q1.8 1.8 1.8 3.5V24Q1.8 25.8 3.5 25.8H17.8Q19.5 25.8 19.5 24V19L24.5 13.5L19.5 8"/><path d="M7.5 13.5H24"/></svg>
<div class="a" style="left:1449px;top:747px;width:210px;height:34px;background:#000;border:1px solid #4a484c"></div>
<div class="a" style="left:1661px;top:744px;width:78px;height:39px;background:#000;border:1px solid #4a484c"></div>
<div class="a t " style="top:758.18px;font-size:11.6px;line-height:11.6px;color:#f2f2f2;left:1451px;">IRHD   Hardness</div>
<div class="a t " style="top:758.18px;font-size:11.6px;line-height:11.6px;color:#f2f2f2;left:1664px;">0.00</div>
<svg class="a" style="left:1411px;top:789px" width="28" height="28" fill="none" stroke="#56545a" stroke-width="1.6" stroke-linejoin="round"><path d="M19.5 8V3.5Q19.5 1.8 17.8 1.8H3.5Q1.8 1.8 1.8 3.5V24Q1.8 25.8 3.5 25.8H17.8Q19.5 25.8 19.5 24V19L24.5 13.5L19.5 8"/><path d="M7.5 13.5H24"/></svg>
<div class="a" style="left:1449px;top:787px;width:210px;height:34px;background:#000;border:1px solid #4a484c"></div>
<div class="a" style="left:1661px;top:785px;width:78px;height:39px;background:#000;border:1px solid #4a484c"></div>
<div class="a t " style="top:799.18px;font-size:11.6px;line-height:11.6px;color:#f2f2f2;left:1664px;">0.00</div>
<div class="a t " style="top:830.81px;font-size:11.8px;line-height:11.8px;color:#f0f0f0;left:1410.5px;">Notes</div>
<div class="a" style="left:1553px;top:829px;width:13px;height:13px;background:#d6d6d8;"></div>
<div class="a t " style="top:832.20px;font-size:11.7px;line-height:11.7px;color:#f0f0f0;left:1571px;">Save for next test</div>
<div class="a" style="left:1411px;top:848px;width:323px;height:192px;background:#020203;border:1px solid #4a484c"></div>
<div class="a" style="left:0px;top:1040px;width:1742px;height:40px;background:#020308;"></div>
<div class="a" style="left:0px;top:1040px;width:48px;height:40px;background:#050507;"></div>
<div class="a" style="left:48px;top:1040px;width:344px;height:40px;background:#363438;"></div>
<div class="a" style="left:1737px;top:1040px;width:1px;height:40px;background:#5a5a5c;"></div>
<svg class="a" style="left:16px;top:1052px" width="17" height="17"><path d="M0 2.3L7 1.3V8H0Z M8 1.1L16.3 0V8H8Z M0 9H7V15.7L0 14.7Z M8 9H16.3V16.3L8 15.2Z" fill="#fff"/></svg>
<div class="a t " style="top:1053.33px;font-size:14.5px;line-height:14.5px;color:#a9a9ab;left:56.5px;">Cerca in Windows</div>
<svg class="a" style="left:405px;top:1052px" width="23" height="17" fill="none" stroke="#fff" stroke-width="1.3"><rect x="5.5" y="1" width="11.5" height="14"/><path d="M3.5 3H1V13H3.5M19 3H21.5V13H19"/></svg>
<svg class="a" style="left:456px;top:1051px" width="22" height="19"><path d="M0 1H8L10 3H21V16H0Z" fill="#f3d27a"/><rect x="0" y="5" width="21" height="11" fill="#fbe39b"/><path d="M4 11H17V18H13V14H8V18H4Z" fill="#3aa7e8"/></svg>
<svg class="a" style="left:505px;top:1049px" width="22" height="22"><path d="M11 1C5 1 1 5.5 1 11C1 17 6 21 11.5 21C14.5 21 17.5 20 19.5 18.5V14C17.5 15.8 15 16.8 12.5 16.8C9 16.8 6.3 14.8 6.3 12.2H20.8V10.5C20.8 5 17 1 11 1ZM6.4 9C6.8 6.8 8.6 5 11 5C13.4 5 15.3 6.5 15.5 9Z" fill="#1e7ad8"/></svg>
<svg class="a" style="left:552px;top:1049px" width="25" height="23"><path d="M12 3C6.5 3 3 7 3 12C3 17.5 7 21 12 21C15.5 21 18.5 19.5 20 17H15C14 18 13 18.3 12 18.3C9.5 18.3 7.8 16.5 7.7 14H20.8C21 13.3 21 12.7 21 12C21 7 17.5 3 12 3ZM7.8 10.5C8.2 8.5 9.8 6.8 12 6.8C14.2 6.8 15.8 8.5 16.1 10.5Z" fill="#37a6e8"/><path d="M2 21C0 18 6 9 13 5C19 1.5 24 1 23.5 3.5C23 6 20 9 18 10.5" fill="none" stroke="#f0c23a" stroke-width="1.6"/></svg>
<svg class="a" style="left:603px;top:1053px" width="22" height="15"><rect width="22" height="15" fill="#5aa8e0"/><rect x="1.5" y="1.5" width="19" height="12" fill="#8fc8ef"/><circle cx="7" cy="7" r="3.5" fill="#f6f6f6"/><path d="M7 7V3.5A3.5 3.5 0 0 1 10.5 7Z" fill="#e8a23a"/><rect x="12" y="3" width="6" height="9" fill="#3c86c8"/></svg>
<div class="a" style="left:651px;top:1048px;width:24px;height:24px;border-radius:50%;background:#e0262a"></div>
<div class="a t " style="top:1054.77px;font-size:11.5px;line-height:11.5px;color:#fff;font-weight:700;left:648.00px;width:30px;text-align:center;">RX</div>
<div class="a" style="left:643px;top:1077px;width:40px;height:3px;background:#7db6e6;"></div>
<div class="a" style="left:688px;top:1040px;width:48px;height:40px;background:#3a393e;"></div>
<div class="a" style="left:688px;top:1077px;width:48px;height:3px;background:#7db6e6;"></div>
<div class="a" style="left:700px;top:1048px;width:24px;height:24px;background:#d92a30"></div>
<div class="a" style="left:702px;top:1049px;width:20px;height:7px;background:#fff;"></div>
<div class="a" style="left:704px;top:1051px;width:16px;height:3px;background:#333;"></div>
<div class="a" style="left:702px;top:1058px;width:20px;height:5px;background:#f8d0d0;"></div>
<div class="a" style="left:700px;top:1064px;width:24px;height:8px;background:#9a9aa6;"></div>
<svg class="a" style="left:1532px;top:1055px" width="14" height="9" fill="none" stroke="#fff" stroke-width="1.2"><path d="M1 8L7 2L13 8"/></svg>
<svg class="a" style="left:1562px;top:1053px" width="18" height="14" fill="none" stroke="#fff" stroke-width="1.1"><path d="M1 4.5H4L8 1V13L4 9.5H1Z M10.5 4.5Q12 7 10.5 9.5 M12.8 2.8Q15.2 7 12.8 11.2 M15 1Q18.3 7 15 13"/></svg>
<svg class="a" style="left:1594px;top:1053px" width="18" height="16"><path d="M1.5 1.5H16V11" fill="none" stroke="#fff" stroke-width="1.1"/><path d="M2.5 2.5V13H7" fill="none" stroke="#fff" stroke-width="1.1"/><rect x="1" y="1" width="3" height="3" fill="none" stroke="#fff" stroke-width="1"/><circle cx="12.5" cy="12" r="3.8" fill="#e02a2a"/><path d="M10.8 10.3L14.2 13.7M14.2 10.3L10.8 13.7" stroke="#fff" stroke-width="1.1"/></svg>
<div class="a t " style="top:1044.90px;font-size:11.7px;line-height:11.7px;color:#f4f4f4;left:1623.70px;width:60px;text-align:center;">12.35</div>
<div class="a t " style="top:1062.90px;font-size:11.7px;line-height:11.7px;color:#f4f4f4;left:1614.00px;width:80px;text-align:center;">20/03/2020</div>
<svg class="a" style="left:1700px;top:1051px" width="19" height="18" fill="none" stroke="#fff" stroke-width="1"><path d="M1.5 1.5H16.5V13.5H11L8.5 16L6 13.5H1.5Z"/></svg>
</body></html>
